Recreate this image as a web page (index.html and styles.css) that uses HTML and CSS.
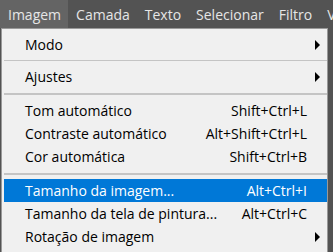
FILE: index.html
```html
<!DOCTYPE html>
<html lang="pt">
<head>
<meta charset="utf-8">
<link rel="stylesheet" href="styles.css">
</head>
<body>
<div class="screen">
  <nav class="menubar">
    <span class="top active">Imagem</span>
    <span class="top">Camada</span>
    <span class="top">Texto</span>
    <span class="top">Selecionar</span>
    <span class="top">Filtro</span>
    <span class="top">V</span>
  </nav>
  <div class="menu">
    <div class="item"><span class="label">Modo</span><span class="arrow"></span></div>
    <div class="sep"></div>
    <div class="item"><span class="label">Ajustes</span><span class="arrow"></span></div>
    <div class="sep thick"></div>
    <div class="item"><span class="label">Tom automático</span><span class="key">Shift+Ctrl+L</span></div>
    <div class="item"><span class="label">Contraste automático</span><span class="key">Alt+Shift+Ctrl+L</span></div>
    <div class="item"><span class="label">Cor automática</span><span class="key">Shift+Ctrl+B</span></div>
    <div class="sep thick"></div>
    <div class="item selected"><span class="label">Tamanho da imagem...</span><span class="key">Alt+Ctrl+I</span></div>
    <div class="item"><span class="label">Tamanho da tela de pintura...</span><span class="key">Alt+Ctrl+C</span></div>
    <div class="item"><span class="label">Rotação de imagem</span><span class="arrow"></span></div>
  </div>
</div>
</body>
</html>
```
FILE: styles.css
```css
html, body {
  margin: 0;
  padding: 0;
  background: #535353;
}
.screen {
  width: 333px;
  height: 252px;
  overflow: hidden;
  background: #535353;
  font-family: "Open Sans", "Noto Sans", sans-serif;
  font-size: 14px;
}
.menubar {
  display: flex;
  height: 28px;
  align-items: stretch;
  white-space: nowrap;
}
.top {
  display: flex;
  align-items: center;
  padding: 0 7px 0 8px;
  color: #e6e6e6;
}
.top.active {
  background: #646464;
}
.menu {
  margin-left: 1px;
  width: 327px;
  height: 240px;
  background: #f0f0f0;
  border: 1px solid #999;
  border-bottom: none;
  padding: 4px 0 0 0;
  box-sizing: border-box;
}
.item {
  height: 23px;
  display: flex;
  align-items: center;
  padding: 0 20px 0 21px;
  margin: 0 0 0 2px;
  color: #000;
  position: relative;
}
.item .label {
  flex: 1;
  white-space: nowrap;
}
.item .key {
  white-space: nowrap;
}
.item.selected {
  background: #0078d7;
  color: #fff;
}
.arrow {
  position: absolute;
  right: 7px;
  top: 50%;
  margin-top: -5px;
  width: 0;
  height: 0;
  border-top: 5px solid transparent;
  border-bottom: 5px solid transparent;
  border-left: 5px solid #000;
}
.sep {
  height: 9px;
  display: flex;
  align-items: center;
  margin-left: 2px;
}
.sep::before {
  content: "";
  display: block;
  width: 100%;
  height: 1px;
  background: #c4c4c4;
}
.sep.thick {
  height: 11px;
}
.sep.thick::before {
  height: 2px;
}
```
